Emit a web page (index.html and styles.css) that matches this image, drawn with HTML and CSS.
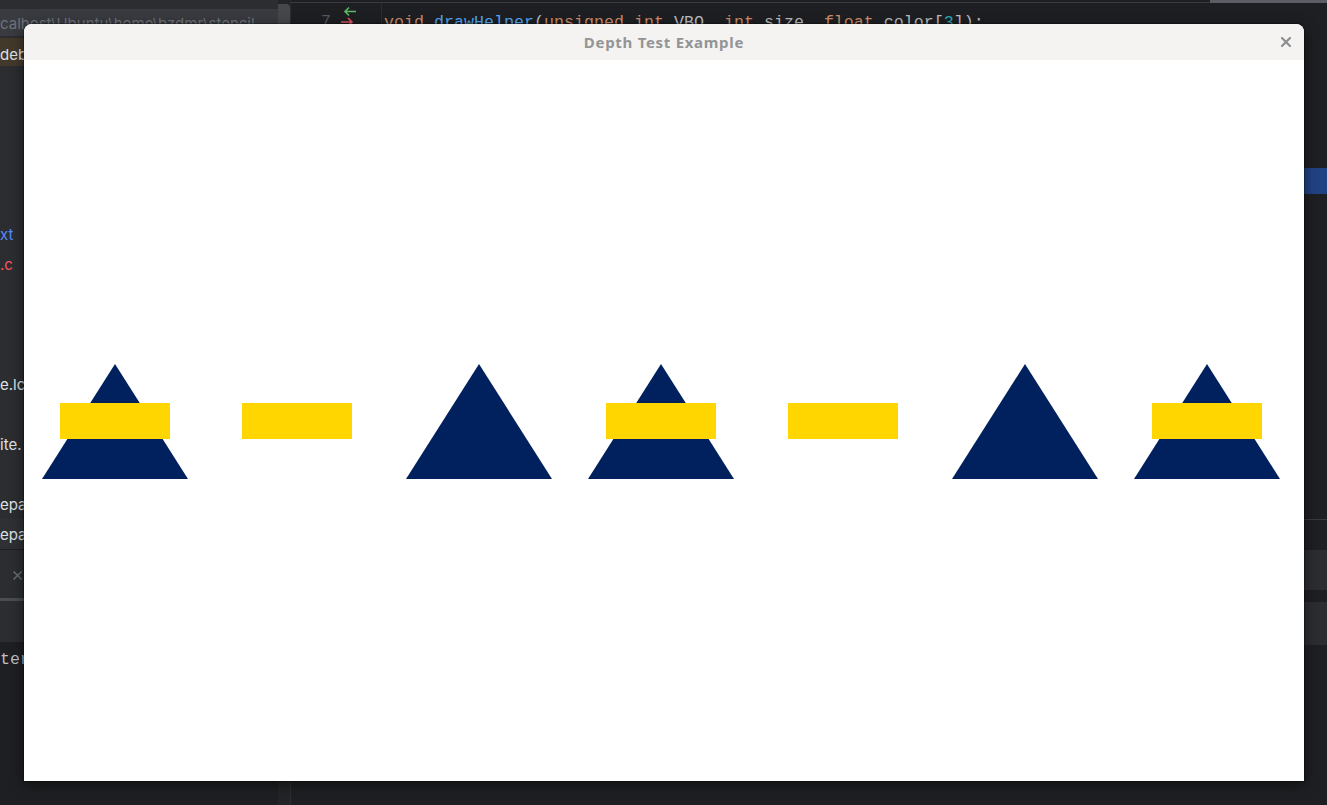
FILE: index.html
```html
<!DOCTYPE html>
<html>
<head>
<meta charset="utf-8">
<title>Depth Test Example</title>
<link rel="stylesheet" href="styles.css">
</head>
<body>
<div class="ide">
  <aside class="project">
    <div class="proj-top"></div>
    <div class="path">calhost\Ubuntu\home\bzdmr\stencil</div>
    <div class="tree-row selected"><span class="name">deb</span></div>
    <div class="tree">
      <div class="tree-row"><span class="name deep">src</span></div>
      <div class="tree-row"><span class="name deep">include</span></div>
      <div class="tree-row"><span class="name deep">shaders</span></div>
      <div class="tree-row"><span class="name deep">cmake-build</span></div>
      <div class="tree-row"><span class="name deep">build</span></div>
      <div class="tree-row"><span class="name blue">xt</span></div>
      <div class="tree-row"><span class="name red">.c</span></div>
      <div class="tree-row"><span class="name deep">External Libraries</span></div>
      <div class="tree-row"><span class="name deep">Scratches</span></div>
      <div class="tree-row"><span class="name deep">glad</span></div>
      <div class="tree-row"><span class="name">e.lc</span></div>
      <div class="tree-row"><span class="name deep">glfw</span></div>
      <div class="tree-row"><span class="name">ite.</span></div>
      <div class="tree-row"><span class="name deep">shader</span></div>
      <div class="tree-row"><span class="name">epa</span></div>
      <div class="tree-row alt"><span class="name">epa</span></div>
    </div>
    <div class="tool-header"><span class="close-x">×</span></div>
    <div class="tool-sep"></div>
    <div class="tool-tabs"></div>
    <div class="terminal"><span class="term-text">ter</span></div>
  </aside>
  <div class="vscroll"><div class="thumb"></div></div>
  <main class="editor">
    <div class="editor-top"><div class="top-fill"></div><div class="top-thumb"></div></div>
    <div class="code-row">
      <div class="gutter">
        <span class="line-no">7</span>
        <svg class="marks" width="22" height="24" viewBox="0 0 22 24">
          <path d="M4 5.5 H15 M8 1.5 L4 5.5 L8 9.5" fill="none" stroke="#5fb865" stroke-width="1.6"/>
          <path d="M0 16 H11 M7 12 L11 16 L7 20" fill="none" stroke="#e05563" stroke-width="1.6"/>
        </svg>
      </div>
      <div class="code"><span class="kw">void</span> <span class="fn">drawHelper</span><span class="pn">(</span><span class="kw">unsigned int</span> <span class="pn">VBO,</span> <span class="kw">int</span> <span class="pn">size,</span> <span class="kw">float</span> <span class="pn">color[</span><span class="num">3</span><span class="pn">]);</span></div>
    </div>
    <div class="ed-space s1"></div>
    <div class="ed-highlight"></div>
    <div class="ed-space s2"></div>
    <div class="ed-sep"></div>
    <div class="ed-space s3"></div>
    <div class="ed-block b1"></div>
    <div class="ed-space s4"></div>
    <div class="ed-block b2"></div>
  </main>
</div>

<div class="window">
  <header class="titlebar">
    <span class="title">Depth Test Example</span>
    <button class="close" aria-label="Close">
      <svg width="10" height="10" viewBox="0 0 10 10"><path d="M1 1 L9 9 M9 1 L1 9" stroke="#8c8e90" stroke-width="2.2" stroke-linecap="square"/></svg>
    </button>
  </header>
  <div class="canvas">
    <svg width="1280" height="721" viewBox="0 0 1280 721">
      <g class="tri">
        <polygon points="91,304 18,419 164,419"/>
        <polygon points="455,304 382,419 528,419"/>
        <polygon points="637,304 564,419 710,419"/>
        <polygon points="1001,304 928,419 1074,419"/>
        <polygon points="1183,304 1110,419 1256,419"/>
      </g>
      <g class="rect">
        <rect x="36" y="343" width="110" height="36"/>
        <rect x="218" y="343" width="110" height="36"/>
        <rect x="582" y="343" width="110" height="36"/>
        <rect x="764" y="343" width="110" height="36"/>
        <rect x="1128" y="343" width="110" height="36"/>
      </g>
    </svg>
  </div>
</div>
</body>
</html>
```

FILE: styles.css
```css
* { box-sizing: border-box; }

html, body {
  margin: 0;
  padding: 0;
}

body {
  width: 1327px;
  height: 805px;
  overflow: hidden;
  position: relative;
  background: #1e1f22;
  font-family: Inter, "Noto Sans", sans-serif;
}

.ide {
  display: flex;
  height: 805px;
}

/* Project panel */
.project {
  width: 278px;
  background: #2b2d30;
  display: flex;
  flex-direction: column;
  overflow: hidden;
}

.proj-top {
  height: 9px;
  background: #2b2d30;
}

.path {
  height: 27px;
  background: #393b40;
  color: #6f737a;
  font-size: 15px;
  line-height: 30px;
  white-space: nowrap;
  overflow: hidden;
}

.tree-row {
  height: 30px;
  display: flex;
  align-items: center;
  font-size: 15px;
  color: #dfe1e5;
  white-space: nowrap;
}

.tree-row.selected {
  margin-top: 2px;
  height: 28px;
  background: #43392b;
  padding-top: 4px;
}

.tree {
  margin-top: 3px;
}

.tree-row.alt {
  background: #2e3033;
}

.name.deep { padding-left: 60px; }
.name.blue { color: #548af7; }
.name.red { color: #f75464; }

.tool-header {
  height: 49px;
  border-top: 1px solid #1e1f22;
  display: flex;
  align-items: center;
}

.close-x {
  padding-left: 11px;
  color: #6f737a;
  font-size: 20px;
  font-weight: 300;
}

.tool-sep {
  height: 3px;
  background: #4a4d52;
}

.tool-tabs {
  height: 41px;
  background: #2b2d30;
}

.terminal {
  flex: 1;
  background: #1e1f22;
  padding-top: 6px;
}

.term-text {
  font-family: "Liberation Mono", "DejaVu Sans Mono", monospace;
  font-size: 16.6px;
  color: #bcbec4;
}

.vscroll {
  width: 12px;
  background: #232427;
  padding-top: 4px;
}

.vscroll .thumb {
  height: 30px;
  background: #45474b;
  border-radius: 0 4px 0 0;
}

/* Editor */
.editor {
  flex: 1;
  display: flex;
  flex-direction: column;
  background: #1e1f22;
  border-left: 1px solid #2b2d30;
}

.editor-top {
  height: 3px;
  display: flex;
}

.top-fill {
  flex: 1;
  border-bottom: 1px solid #393b40;
}

.top-thumb {
  width: 117px;
  background: #5a5d63;
}

.code-row {
  height: 31px;
  display: flex;
  padding-top: 4px;
}

.gutter {
  width: 91px;
  border-right: 1px solid #2b2d30;
  display: flex;
  align-items: flex-start;
  padding-left: 30px;
  margin-top: -4px;
}

.line-no {
  font-family: "Liberation Mono", "DejaVu Sans Mono", monospace;
  font-size: 16.6px;
  line-height: 30px;
  margin-top: 4px;
  color: #515865;
}

.marks {
  margin-left: 10px;
  margin-top: 3px;
}

.code {
  padding-left: 2px;
  font-family: "Liberation Mono", "DejaVu Sans Mono", monospace;
  font-size: 16.67px;
  line-height: 32px;
  white-space: pre;
  color: #bcbec4;
}

.kw { color: #cf8e6d; }
.fn { color: #56a8f5; }
.pn { color: #bcbec4; }
.num { color: #2aacb8; }

.ed-space.s1 { height: 134px; }
.ed-highlight { height: 26px; background: #214283; }
.ed-space.s2 { height: 325px; }
.ed-sep { height: 1px; background: #393b40; }
.ed-space.s3 { height: 30px; }
.ed-block.b1 { height: 40px; background: #2b2d30; }
.ed-space.s4 { height: 12px; }
.ed-block.b2 { height: 43px; background: #2b2d30; }

/* Overlay window */
.window {
  position: absolute;
  left: 24px;
  top: 24px;
  width: 1280px;
  height: 757px;
  display: flex;
  flex-direction: column;
  border-radius: 8px 8px 0 0;
  overflow: hidden;
  box-shadow: 0 3px 14px rgba(0, 0, 0, 0.55), 0 0 0 1px rgba(0, 0, 0, 0.25);
  background: #ffffff;
}

.titlebar {
  height: 36px;
  background: #f4f3f1;
  display: flex;
  align-items: center;
  justify-content: center;
  position: relative;
}

.title {
  font-family: "Noto Sans", "DejaVu Sans", sans-serif;
  font-weight: 700;
  font-size: 15px;
  letter-spacing: 0.7px;
  color: #929496;
  margin-top: -1px;
}

.close {
  position: absolute;
  right: 13px;
  top: 13px;
  width: 10px;
  height: 10px;
  padding: 0;
  border: 0;
  background: transparent;
  display: flex;
}

.canvas {
  flex: 1;
  background: #ffffff;
}

.canvas svg {
  display: block;
}

.tri polygon { fill: #00205e; }
.rect rect { fill: #ffd600; }
```
